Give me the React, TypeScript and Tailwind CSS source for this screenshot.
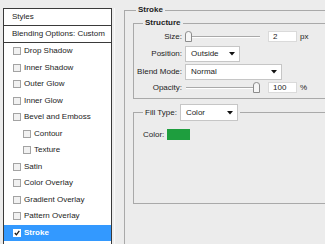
const effects = [
  { name: "Drop Shadow" },
  { name: "Inner Shadow" },
  { name: "Outer Glow" },
  { name: "Inner Glow" },
  { name: "Bevel and Emboss" },
  { name: "Contour", indent: true },
  { name: "Texture", indent: true },
  { name: "Satin" },
  { name: "Color Overlay" },
  { name: "Gradient Overlay" },
  { name: "Pattern Overlay" },
  { name: "Stroke", checked: true },
]

function Checkbox({ checked }: { checked?: boolean }) {
  return (
    <span
      className={`flex h-[8px] w-[8px] shrink-0 items-center justify-center border ${
        checked ? "border-white bg-white" : "border-[#a3a3a3] bg-[#f1f1f1]"
      }`}
    >
      {checked && (
        <svg width="6" height="6" viewBox="0 0 6 6">
          <path d="M0.8 3 L2.4 4.8 L5.3 0.8" fill="none" stroke="#1a1a1a" strokeWidth="1.3" />
        </svg>
      )}
    </span>
  )
}

function Dropdown({ value, width }: { value: string; width: string }) {
  return (
    <div className={`flex items-center justify-between border border-[#c6c6c6] bg-white pl-[5px] pr-[4px] ${width}`}>
      <span>{value}</span>
      <svg width="6" height="4" viewBox="0 0 6 4">
        <path d="M0 0 H6 L3 3.5 Z" fill="#111" />
      </svg>
    </div>
  )
}

function Thumb() {
  return (
    <svg width="7" height="11" viewBox="0 0 7 11">
      <path d="M0.5 3 Q0.5 0.5 3.5 0.5 Q6.5 0.5 6.5 3 V10.5 H0.5 Z" fill="#f6f6f6" stroke="#8c8c8c" />
    </svg>
  )
}

function Slider({ at }: { at: "start" | "end" }) {
  return (
    <div className="relative ml-[3px] h-[11px] w-[75px]">
      <div className="absolute left-[1px] right-0 top-[5px] h-[1px] bg-[#a9a9a9]" />
      <div className="absolute left-[1px] right-0 top-[6px] h-[1px] bg-white" />
      <div className={`absolute top-0 ${at === "start" ? "left-0" : "right-0"}`}>
        <Thumb />
      </div>
    </div>
  )
}

function NumberBox({ value, unit }: { value: string; unit: string }) {
  return (
    <>
      <div className="ml-[8px] flex h-[11px] w-[29px] items-center border border-[#dadada] bg-white pl-[4px]">
        {value}
      </div>
      <span className="ml-[3px]">{unit}</span>
    </>
  )
}

export default function App() {
  return (
    <div className="flex h-[244px] w-[325px] overflow-hidden bg-[#ececec] font-['Liberation_Sans',Arial,sans-serif] text-[8px] leading-[10px] text-[#1c1c1c]">
      {/* Styles list */}
      <div className="ml-[3px] mt-[8px] flex h-[260px] w-[109px] shrink-0 flex-col border border-[#3a3a3a] bg-white">
        <div className="flex h-[17px] shrink-0 items-center border-b border-[#3a3a3a] pl-[8px]">Styles</div>
        <div className="flex h-[17px] shrink-0 items-center border-b border-[#3a3a3a] pl-[8px]">
          Blending Options: Custom
        </div>
        {effects.map((fx) => (
          <div
            key={fx.name}
            className={`flex h-[16.5px] shrink-0 items-center gap-[3px] ${fx.indent ? "pl-[19px]" : "pl-[9px]"} ${
              fx.checked ? "bg-[#3399ff] font-bold text-white" : ""
            }`}
          >
            <Checkbox checked={fx.checked} />
            <span>{fx.name}</span>
          </div>
        ))}
      </div>
      <div className="ml-[2px] mt-[8px] h-[260px] w-[1px] shrink-0 bg-[#f8f8f8]" />

      {/* Stroke options */}
      <div className="ml-[9px] mt-[5px] w-[400px] shrink-0">
        <fieldset className="h-[300px] border border-[#a9a9a9]">
          <legend className="ml-[11px] px-[2px] font-bold">Stroke</legend>
          <div className="pl-[8px] pt-[3px]">
            <fieldset className="border border-[#a9a9a9] pb-[5px]">
              <legend className="ml-[9px] px-[2px] font-bold">Structure</legend>
              <div className="mt-[3px] flex h-[11px] items-center">
                <span className="w-[48px] text-right">Size:</span>
                <Slider at="start" />
                <NumberBox value="2" unit="px" />
              </div>
              <div className="mt-[4px] flex items-center">
                <span className="w-[48px] text-right">Position:</span>
                <div className="ml-[3px]">
                  <Dropdown value="Outside" width="h-[16px] w-[55px]" />
                </div>
              </div>
              <div className="mt-[2px] flex items-center">
                <span className="w-[48px] text-right">Blend Mode:</span>
                <div className="ml-[3px]">
                  <Dropdown value="Normal" width="h-[16px] w-[97px]" />
                </div>
              </div>
              <div className="mt-[2px] flex h-[11px] items-center">
                <span className="w-[48px] text-right">Opacity:</span>
                <Slider at="end" />
                <NumberBox value="100" unit="%" />
              </div>
            </fieldset>

            <fieldset className="mt-[5px] h-[100px] border border-[#a9a9a9]">
              <legend className="ml-[9px] flex items-center px-[2px]">
                <span>Fill Type:</span>
                <div className="ml-[3px]">
                  <Dropdown value="Color" width="h-[17px] w-[58px]" />
                </div>
              </legend>
              <div className="mt-[8px] flex items-center pl-[9px]">
                <span>Color:</span>
                <div className="ml-[3px] h-[11px] w-[23px] bg-[#1e9e3e]" />
              </div>
            </fieldset>
          </div>
        </fieldset>
      </div>
    </div>
  )
}
